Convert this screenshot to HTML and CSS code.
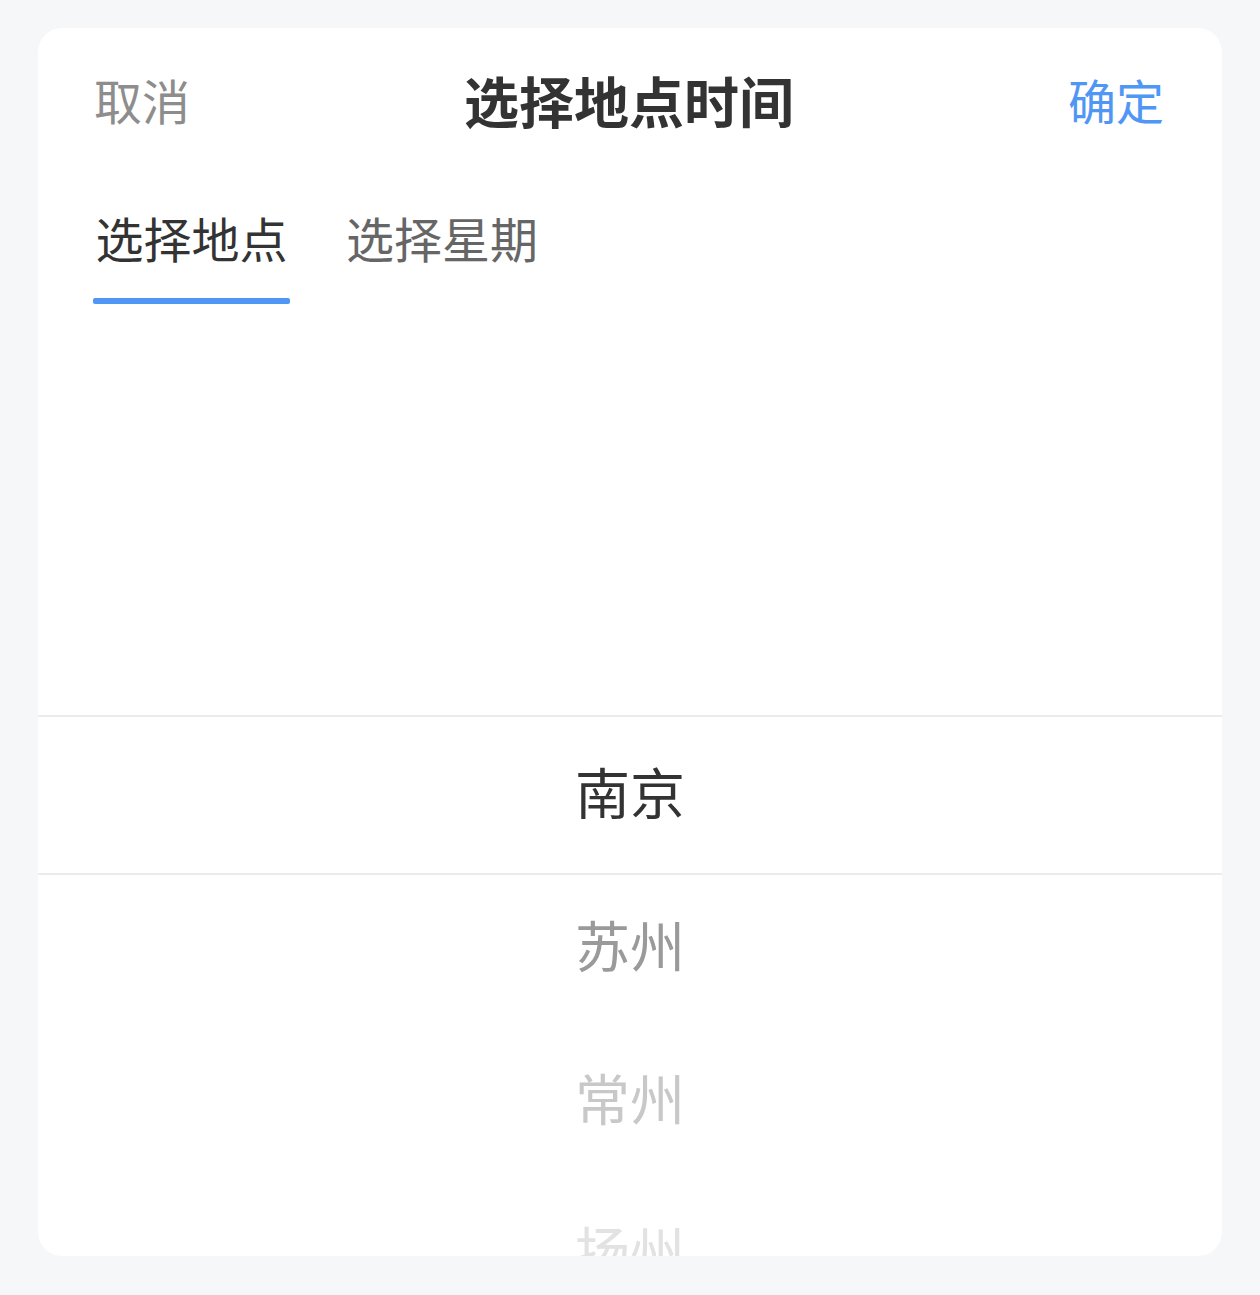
FILE: index.html
```html
<!DOCTYPE html>
<html lang="zh-CN">
<head>
<meta charset="utf-8">
<title>选择地点时间</title>
<link rel="stylesheet" href="styles.css">
</head>
<body>
<div class="sheet">
  <header class="sheet-header">
    <span class="action action-cancel">取消</span>
    <span class="sheet-title">选择地点时间</span>
    <span class="action action-confirm">确定</span>
  </header>
  <nav class="tabs">
    <div class="tab tab-active">
      <span class="tab-label">选择地点</span>
      <span class="tab-bar"></span>
    </div>
    <div class="tab">
      <span class="tab-label">选择星期</span>
    </div>
  </nav>
  <section class="picker">
    <div class="picker-indicator"></div>
    <ul class="picker-list">
      <li class="picker-item is-selected">南京</li>
      <li class="picker-item fade-1">苏州</li>
      <li class="picker-item fade-2">常州</li>
      <li class="picker-item fade-3">扬州</li>
    </ul>
  </section>
</div>
</body>
</html>
```
FILE: styles.css
```css
* {
  box-sizing: border-box;
}

html, body {
  margin: 0;
  padding: 0;
}

body {
  background: #f6f7f9;
  padding: 28px 38px 39px;
  font-family: "Noto Sans CJK SC", "Noto Sans", sans-serif;
  color: #333333;
}

.sheet {
  background: #ffffff;
  border-radius: 24px;
  height: 1228px;
  overflow: hidden;
  display: flex;
  flex-direction: column;
}

.sheet-header {
  display: flex;
  justify-content: space-between;
  align-items: flex-start;
  padding: 35px 58px 0 56px;
  height: 111px;
}

.action {
  font-size: 48px;
  line-height: 72px;
}

.action-cancel {
  color: #8d8d8d;
}

.action-confirm {
  color: #5096f5;
}

.sheet-title {
  font-size: 55px;
  line-height: 72px;
  font-weight: 700;
  color: #333333;
}

.tabs {
  display: flex;
  gap: 56px;
  padding: 62px 0 0 55px;
}

.tab {
  display: flex;
  flex-direction: column;
  align-items: center;
  gap: 25px;
}

.tab-label {
  font-size: 48px;
  line-height: 72px;
  color: #666666;
}

.tab-active .tab-label {
  color: #333333;
}

.tab-bar {
  display: block;
  width: 197px;
  height: 6px;
  border-radius: 2px;
  background: #5096f5;
}

.picker {
  position: relative;
  flex: 1;
  overflow: hidden;
}

.picker-indicator {
  position: absolute;
  left: 0;
  right: 0;
  top: 411px;
  height: 160px;
  border-top: 2px solid #ebebeb;
  border-bottom: 2px solid #ebebeb;
  pointer-events: none;
}

.picker-list {
  list-style: none;
  margin: 0;
  padding: 410px 0 0;
}

.picker-item {
  height: 153px;
  line-height: 153px;
  text-align: center;
  font-size: 55px;
  color: #333333;
}

.picker-item.fade-1 {
  color: #9a9a9a;
}

.picker-item.fade-2 {
  color: #c8c8c8;
}

.picker-item.fade-3 {
  color: #e2e2e2;
}
```
